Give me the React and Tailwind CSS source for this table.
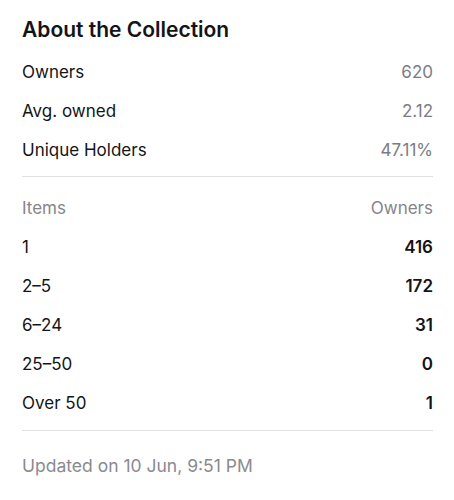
const stats = [
  { label: 'Owners', value: '620' },
  { label: 'Avg. owned', value: '2.12' },
  { label: 'Unique Holders', value: '47.11%' },
];

const distribution = [
  { items: '1', owners: '416' },
  { items: '2–5', owners: '172' },
  { items: '6–24', owners: '31' },
  { items: '25–50', owners: '0' },
  { items: 'Over 50', owners: '1' },
];

export default function App() {
  return (
    <div className="w-[454px] h-[500px] bg-white font-['Inter','Liberation_Sans',sans-serif] text-[#141416] pl-[22px] pr-[21px] pt-[16px]">
      <h2 className="text-[21px] leading-[28px] font-semibold">About the Collection</h2>

      <div className="mt-[9px]">
        {stats.map((s) => (
          <div key={s.label} className="flex items-center justify-between h-[39px] text-[17px]">
            <span>{s.label}</span>
            <span className="text-[#7c7c84]">{s.value}</span>
          </div>
        ))}
      </div>

      <div className="mt-[6px] border-t border-[#e1e1e4]" />

      <div className="mt-[12px]">
        <div className="flex items-center justify-between h-[39px] text-[17px] text-[#85858c]">
          <span>Items</span>
          <span>Owners</span>
        </div>
        {distribution.map((d) => (
          <div key={d.items} className="flex items-center justify-between h-[39px] text-[17px]">
            <span>{d.items}</span>
            <span className="font-semibold">{d.owners}</span>
          </div>
        ))}
      </div>

      <div className="mt-[7px] border-t border-[#e1e1e4]" />

      <p className="mt-[23px] text-[17.5px] leading-[24px] text-[#8a8a90]">Updated on 10 Jun, 9:51 PM</p>
    </div>
  );
}
